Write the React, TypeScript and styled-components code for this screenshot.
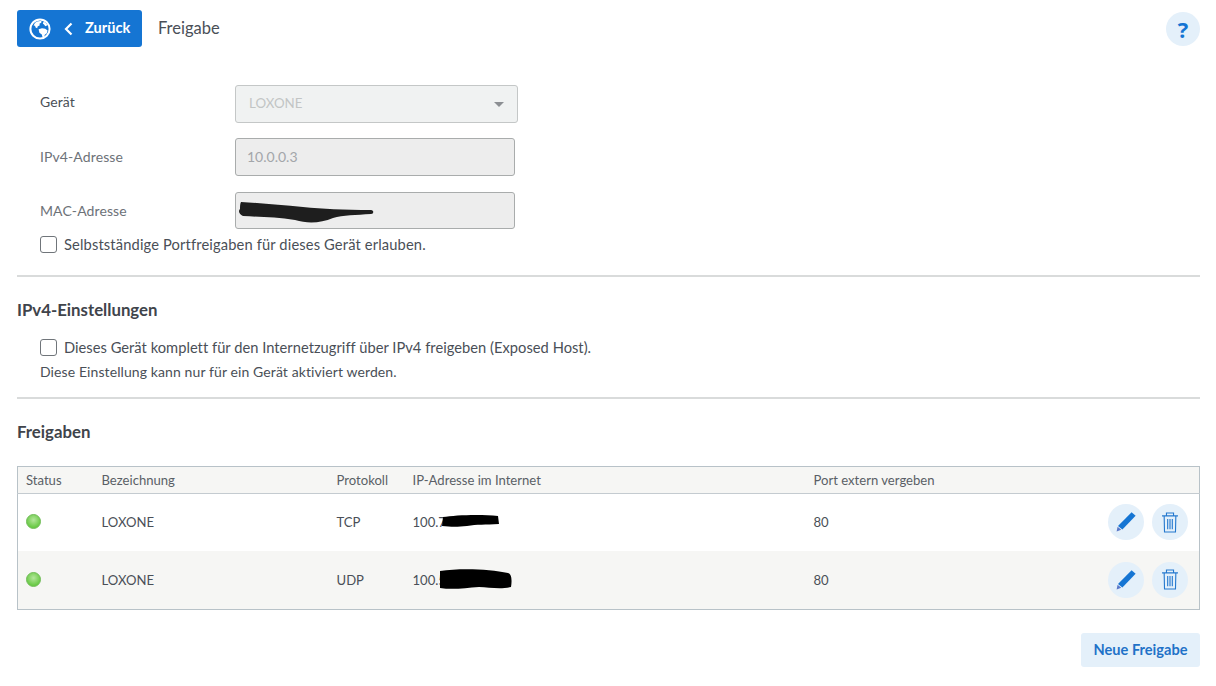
import React from "react";
import styled, { createGlobalStyle } from "styled-components";

const Global = createGlobalStyle`
  html, body { margin: 0; padding: 0; background: #fff; }
  body { font-family: "Lato", "Open Sans", "Liberation Sans", sans-serif; font-size: 14px; color: #4a4f57; }
`;
const Page = styled.div`
  width: 1216px; height: 686px; box-sizing: border-box; padding: 10px 16px 0 17px; overflow: hidden;
`;
const Header = styled.header`
  display: flex; align-items: center; height: 37px;
`;
const BackButton = styled.button`
  display: flex; align-items: center; width: 125px; height: 37px; padding: 0 0 0 12px; box-sizing: border-box;
  background: #1575d3; color: #fff; border: 0; border-radius: 3px; font: 700 14.6px "Lato", sans-serif;
`;
const BackLabel = styled.span`
  padding-bottom: 2px;
`;
const BackChevron = styled.svg`
  margin: 0 12px 0 13px;
`;
const Title = styled.h1`
  margin: 0 0 0 16px; padding-bottom: 2px; font-size: 16.5px; font-weight: 400; color: #4a4f57; flex: 1;
`;
const Help = styled.div`
  width: 34px; height: 34px; border-radius: 50%; background: #e4f0fa; color: #1575d3;
  display: flex; align-items: center; justify-content: center; font: 700 22px "Open Sans", sans-serif;
`;
const Form = styled.div`
  padding: 38px 0 0 23px;
`;
const FormRow = styled.div<{ $h: number; $mb: number; $dim?: boolean }>`
  display: flex; align-items: center; height: ${p => p.$h}px; margin-bottom: ${p => p.$mb}px;
  color: ${p => (p.$dim ? "#6d7278" : "#4a4f57")};
`;
const Label = styled.label<{ $lift: number }>`
  width: 195px; font-size: 14px; letter-spacing: 0.1px; padding-bottom: ${p => p.$lift}px;
`;
const Field = styled.div<{ $w: number; $light?: boolean }>`
  position: relative; width: ${p => p.$w}px; height: 100%; box-sizing: border-box;
  display: flex; align-items: center; justify-content: space-between;
  padding: 0 ${p => (p.$light ? 13 : 11)}px 2px; border-radius: 3px;
  background: ${p => (p.$light ? "#f0f2f2" : "#ededed")};
  border: 1px solid ${p => (p.$light ? "#c4c7c7" : "#a9acac")};
  color: ${p => (p.$light ? "#c2c5c5" : "#a3a6aa")}; font-size: ${p => (p.$light ? 13.3 : 14)}px;
`;
const Caret = styled.span`
  width: 0; height: 0; margin: 2px 0 0; border: 5px solid transparent; border-top: 5px solid #8c8f93; border-bottom: 0;
`;
const Redaction = styled.span`
  position: absolute; left: 2px; top: 5px; line-height: 0;
`;
const Check = styled.label<{ $track: number }>`
  display: flex; align-items: center; height: 17px; gap: 7px; font-size: 14.7px; letter-spacing: ${p => p.$track}px;
`;
const CheckText = styled.span`
  padding-bottom: 2px;
`;
const Box = styled.span`
  width: 17px; height: 17px; box-sizing: border-box; border: 1.5px solid #70757a; border-radius: 3px; background: #fff;
`;
const Divider = styled.hr<{ $top: number }>`
  margin: ${p => p.$top}px 0 0; height: 2px; border: 0; background: #d9dbdb;
`;
const Heading = styled.h2<{ $top: number }>`
  margin: ${p => p.$top}px 0 0; font-size: 16.8px; line-height: 20px; font-weight: 700; color: #3f444b;
`;
const Section = styled.div<{ $top: number }>`
  padding: ${p => p.$top}px 0 0 23px;
`;
const Note = styled.p`
  margin: 7px 0 0; line-height: 18px; font-size: 14px; letter-spacing: 0.1px;
`;
const TableWrap = styled.table`
  margin-top: 24px; width: 1183px; table-layout: fixed; border-collapse: collapse; border: 1px solid #b8c2c8; font-size: 13.1px;
`;
const HeadRow = styled.tr`
  height: 27px; background: #f6f6f4; border-bottom: 1px solid #c4cbd0;
`;
const Th = styled.th<{ $first?: boolean }>`
  padding: 0 0 1px ${p => (p.$first ? 8 : 0)}px;
  font-weight: 400; text-align: left; color: #5a5f66;
`;
const Row = styled.tr<{ $alt?: boolean }>`
  height: ${p => (p.$alt ? 59 : 57)}px; background: ${p => (p.$alt ? "#f6f6f4" : "#fff")};
`;
const Td = styled.td`
  padding: 0; color: #4a4f57;
`;
const Led = styled.span`
  display: block; margin: 0 0 1px 8px; width: 15px; height: 15px; border-radius: 50%;
  background: radial-gradient(circle at 50% 38%, #b4e69c, #68c944 72%); border: 1px solid #74bd5c; box-sizing: border-box;
`;
const IpCell = styled.div`
  position: relative; display: inline-block;
`;
const IpMask = styled.span`
  position: absolute; left: 25px; top: -4px; line-height: 0;
`;
const Actions = styled.div`
  display: flex; justify-content: flex-end; gap: 8px; padding-right: 11px;
`;
const Round = styled.button`
  width: 36px; height: 36px; padding: 0; border: 0; border-radius: 50%; background: #e4f0fa;
  display: flex; align-items: center; justify-content: center;
`;
const Footer = styled.div`
  display: flex; justify-content: flex-end; margin-top: 23px;
`;
const NewButton = styled.button`
  width: 119px; height: 34px; padding: 0 0 2px; border: 0; border-radius: 3px; background: #e4f0fa; color: #1f72c8;
  font: 700 14.6px "Lato", sans-serif;
`;

const Globe = () => (
  <svg width="22" height="22" viewBox="0 0 22 22">
    <circle cx="11" cy="11" r="9.6" fill="#1575d3" stroke="#fff" strokeWidth="2" />
    <path d="M5.6 5.4C7.4 3.6 10 2.8 12.6 3.2l-.4 1.6-1.8 1 .4 1.4-2.2 1.4-.4 1.6-1.6-.8-.6-1.6-1.4-.4zM9.6 11.2l3.4-1 3.2.6 2.4 1.6-.8 2.8-2 1.6-.6 2.2-1.6.6-.8-3.2-2.4-1.6zM14.6 3.8c1.6.6 3 1.8 3.8 3.4l-2 1-1.4-1.6-1.2-1.2z" fill="#fff" />
  </svg>
);
const Pencil = () => (
  <svg width="24" height="24" viewBox="0 0 24 24">
    <path d="M17.6 2.2l4 3.6-13.2 13.6-4.4-3.4z" fill="#1575d3" />
    <path d="M3.6 16.8l3.6 3-4.6 1.8z" fill="#5a78c8" />
  </svg>
);
const Trash = () => (
  <svg width="18" height="23" viewBox="0 0 20 26" fill="none" stroke="#2478ce" strokeWidth="1.25">
    <path d="M1 5.5h18M6 5.5V2.2h8v3.3M3.4 5.5l.4 18.3h12.4l.4-18.3" />
    <path d="M7.4 9v11.5M10 9v11.5M12.6 9v11.5" />
  </svg>
);
const MacScribble = () => (
  <svg width="136" height="30" viewBox="0 0 136 30">
    <path d="M3 4c20 1 40 3 62 5 20 2 40 3 68 3 3 0 3 4 0 4-15 1-28 1-38 4-12 5-25 6-38 2-18-3-35-3-52-4-4-2-5-5-3-7 0-3 0-5 1-7z" fill="#1e1e1e" />
  </svg>
);
const Mask1 = () => (
  <svg width="62" height="20" viewBox="0 0 62 20"><path d="M5 7c12-2 38-3 55-1l1 8c-14 1-22 0-32 2-9 1-16 1-25 0z" fill="#000" /></svg>
);
const Mask2 = () => (
  <svg width="76" height="26" viewBox="0 0 76 26"><path d="M2 3c20-3 50-2 68 2 4 1 4 8 3 14-12 3-22 0-32 0-14 1-26 3-39 1z" fill="#000" /></svg>
);

const rows = [
  { proto: "TCP", ip: "100.7", Mask: Mask1 },
  { proto: "UDP", ip: "100.5", Mask: Mask2 },
];

export default function App() {
  return (
    <Page>
      <Global />
      <Header>
        <BackButton>
          <Globe />
          <BackChevron width="9" height="14" viewBox="0 0 9 14" fill="none" stroke="#fff" strokeWidth="2.2"><path d="M7.5 1.5L2 7l5.5 5.5" /></BackChevron>
          <BackLabel>Zurück</BackLabel>
        </BackButton>
        <Title>Freigabe</Title>
        <Help>?</Help>
      </Header>
      <Form>
        <FormRow $h={38} $mb={15}><Label $lift={6}>Gerät</Label><Field $w={283} $light>LOXONE<Caret /></Field></FormRow>
        <FormRow $h={38} $mb={16} $dim><Label $lift={2}>IPv4-Adresse</Label><Field $w={280}>10.0.0.3</Field></FormRow>
        <FormRow $h={37} $mb={7} $dim><Label $lift={0}>MAC-Adresse</Label><Field $w={280}><Redaction><MacScribble /></Redaction></Field></FormRow>
        <Check $track={0.14}><Box /><CheckText>Selbstständige Portfreigaben für dieses Gerät erlauben.</CheckText></Check>
      </Form>
      <Divider $top={22} />
      <Heading $top={23}>IPv4-Einstellungen</Heading>
      <Section $top={19}>
        <Check $track={0.02}><Box /><CheckText>Dieses Gerät komplett für den Internetzugriff über IPv4 freigeben (Exposed Host).</CheckText></Check>
        <Note>Diese Einstellung kann nur für ein Gerät aktiviert werden.</Note>
      </Section>
      <Divider $top={16} />
      <Heading $top={23}>Freigaben</Heading>
      <TableWrap>
        <colgroup><col width={84} /><col width={235} /><col width={76} /><col width={401} /><col width={145} /><col /></colgroup>
        <thead>
          <HeadRow>
            <Th $first>Status</Th><Th>Bezeichnung</Th><Th>Protokoll</Th><Th>IP-Adresse im Internet</Th><Th>Port extern vergeben</Th><Th />
          </HeadRow>
        </thead>
        <tbody>
          {rows.map(({ proto, ip, Mask }, i) => (
            <Row key={proto} $alt={i === 1}>
              <Td><Led /></Td>
              <Td>LOXONE</Td>
              <Td>{proto}</Td>
              <Td><IpCell>{ip}<IpMask><Mask /></IpMask></IpCell></Td>
              <Td>80</Td>
              <Td><Actions><Round><Pencil /></Round><Round><Trash /></Round></Actions></Td>
            </Row>
          ))}
        </tbody>
      </TableWrap>
      <Footer><NewButton>Neue Freigabe</NewButton></Footer>
    </Page>
  );
}
